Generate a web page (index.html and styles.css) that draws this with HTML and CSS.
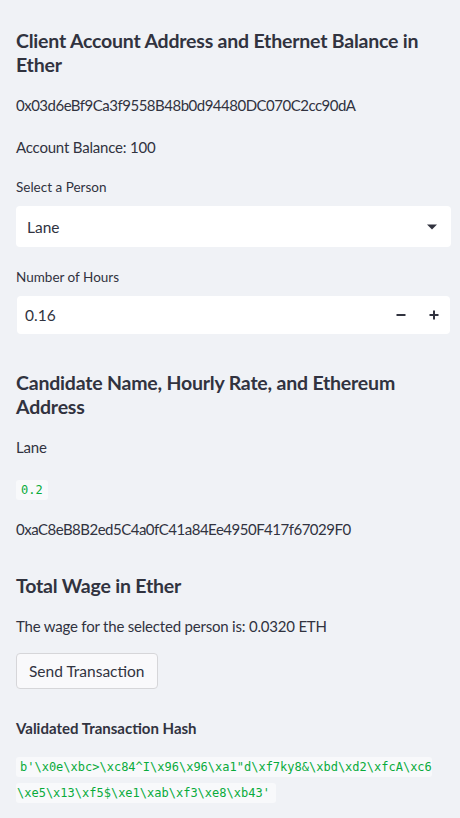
FILE: index.html
```html
<!DOCTYPE html>
<html>
<head>
<meta charset="utf-8">
<link rel="stylesheet" href="styles.css">
</head>
<body>
<div class="sidebar">
  <h2 class="h">Client Account Address and Ethernet Balance in Ether</h2>
  <p class="t addr">0x03d6eBf9Ca3f9558B48b0d94480DC070C2cc90dA</p>
  <p class="t">Account Balance: 100</p>
  <div class="field">
    <label class="lbl">Select a Person</label>
    <div class="select">
      <span>Lane</span>
      <svg class="caret" width="12" height="8" viewBox="0 0 12 8"><path d="M1 1.5h10L6 6.5z" fill="#31333f"/></svg>
    </div>
  </div>
  <div class="field">
    <label class="lbl">Number of Hours</label>
    <div class="number">
      <span>0.16</span>
      <div class="steps">
        <svg width="12" height="12" viewBox="0 0 12 12"><path d="M1.5 6h9" stroke="#31333f" stroke-width="2"/></svg>
        <svg width="12" height="12" viewBox="0 0 12 12"><path d="M1.5 6h9M6 1.5v9" stroke="#31333f" stroke-width="2"/></svg>
      </div>
    </div>
  </div>
  <h2 class="h h2">Candidate Name, Hourly Rate, and Ethereum Address</h2>
  <p class="t lane">Lane</p>
  <p class="t rate"><code class="code">0.2</code></p>
  <p class="t addr">0xaC8eB8B2ed5C4a0fC41a84Ee4950F417f67029F0</p>
  <h2 class="h h3">Total Wage in Ether</h2>
  <p class="t">The wage for the selected person is: 0.0320 ETH</p>
  <button class="btn">Send Transaction</button>
  <h4 class="sub">Validated Transaction Hash</h4>
  <p class="hash"><code class="code first">b'\x0e\xbc&gt;\xc84^I\x96\x96\xa1"d\xf7ky8&amp;\xbd\xd2\xfcA\xc6</code><br><code class="code last">\xe5\x13\xf5$\xe1\xab\xf3\xe8\xb43'</code></p>
</div>
</body>
</html>
```
FILE: styles.css
```css
html, body {
  margin: 0;
  padding: 0;
  background: #f0f2f6;
}
body {
  font-family: Lato, "Noto Sans", sans-serif;
  color: #31333f;
}
.sidebar {
  padding: 27px 9px 0 16px;
  display: flex;
  flex-direction: column;
}
.h {
  font-size: 19.5px;
  font-weight: 700;
  line-height: 24px;
  margin: 2px 0 17px;
  letter-spacing: -0.2px;
}
.h2 { margin-top: 16px; }
.h3 { margin-top: 14px; }
.t {
  font-size: 15px;
  line-height: 22px;
  margin: 0 0 20px;
  letter-spacing: -0.2px;
}
.t.addr { letter-spacing: -0.5px; }
.t.lane { margin-bottom: 19px; }
.t.rate { margin-bottom: 17px; }
.field {
  display: flex;
  flex-direction: column;
  margin-bottom: 21px;
}
.lbl {
  font-size: 13.5px;
  line-height: 18px;
  margin-bottom: 10px;
}
.select, .number {
  background: #fff;
  border-radius: 4px;
  display: flex;
  align-items: center;
  justify-content: space-between;
  font-size: 15.5px;
}
.select {
  height: 41px;
  padding: 0 13px 0 11px;
}
.number {
  height: 38px;
  margin-left: 1px;
  margin-right: 1px;
  padding: 0 10px 0 8px;
}
.steps {
  display: flex;
  gap: 21px;
}
.code {
  font-family: "DejaVu Sans Mono", monospace;
  font-size: 12px;
  color: #09ab3b;
  background: #f8f9fb;
  border-radius: 3px;
  padding: 3px 5px;
  letter-spacing: 0;
}
.btn {
  align-self: flex-start;
  font-family: inherit;
  font-size: 15.5px;
  color: #31333f;
  background: #f9f9fb;
  border: 1px solid #d6d6d9;
  border-radius: 4px;
  height: 36px;
  padding: 0 12px;
  margin: -4px 0 28px;
}
.sub {
  font-size: 15px;
  font-weight: 700;
  margin: 0 0 14px;
  line-height: 22px;
}
.hash {
  margin: 0;
  line-height: 24px;
}
.hash .code.first {
  padding: 3px 0 3px 4px;
}
.hash .code.last {
  padding: 3px 6px 3px 1px;
}
```
